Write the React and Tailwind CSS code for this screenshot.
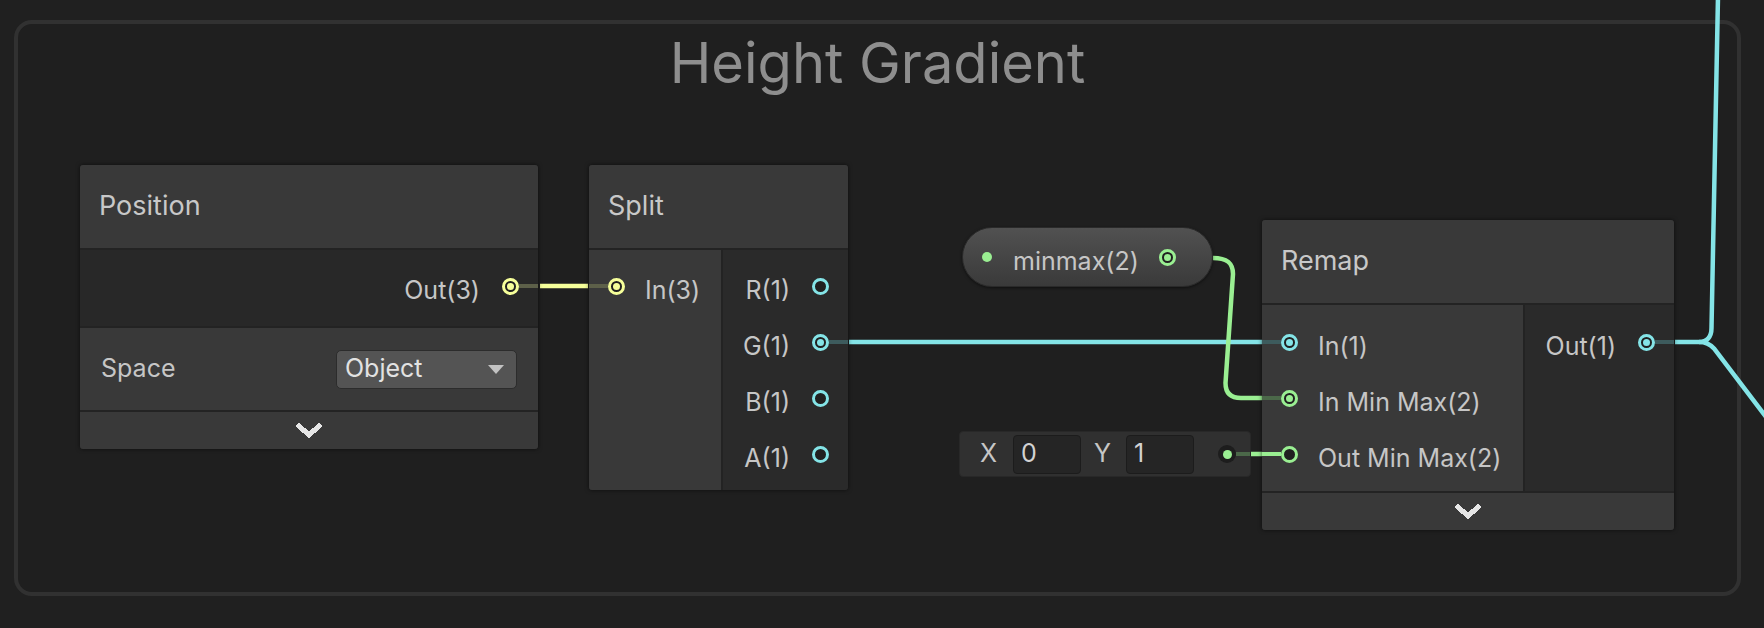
import React from "react";

const tones = {
  yellow: { ring: "border-[#f6ff9a]", dot: "bg-[#f6ff9a]", stub: "bg-[#5d6049]" },
  cyan: { ring: "border-[#84e4e7]", dot: "bg-[#84e4e7]", stub: "bg-[#3d5b5d]" },
  green: { ring: "border-[#9aef92]", dot: "bg-[#9aef92]", stub: "bg-[#4b6849]" },
};

function Port({ tone, connected }) {
  const t = tones[tone];
  return (
    <span className={`w-[17px] h-[17px] shrink-0 rounded-full border-[3px] ${t.ring} bg-[#202020] flex items-center justify-center`}>
      {connected && <span className={`w-[7px] h-[7px] rounded-full ${t.dot}`} />}
    </span>
  );
}

// unconnected ports have no stub, just empty space up to the node edge
function OutRow({ label, tone, connected, className = "h-[56px]" }) {
  return (
    <div className={`flex items-center justify-end ${className}`}>
      <span className="mt-[10px] mr-[22px]">{label}</span>
      <Port tone={tone} connected={connected} />
      <span className={`w-[19px] h-[4px] ${connected ? tones[tone].stub : ""}`} />
    </div>
  );
}

function InRow({ label, tone, connected, stub }) {
  return (
    <div className="h-[56px] flex items-center">
      <span className={`w-[19px] h-[4px] ${stub || (connected ? tones[tone].stub : "")}`} />
      <Port tone={tone} connected={connected} />
      <span className="mt-[10px] ml-[20px] whitespace-nowrap">{label}</span>
    </div>
  );
}

function Chevron() {
  return (
    <svg width="26" height="16" viewBox="0 0 26 16" shapeRendering="crispEdges">
      <path d="M3 3 L13 12 L23 3" fill="none" stroke="#e6e6e6" strokeWidth="5" strokeLinecap="square" />
    </svg>
  );
}

function Node({ className, title, children }) {
  return (
    <div className={`absolute flex flex-col gap-[2px] overflow-hidden rounded-[3px] bg-[#232323] text-[25px] text-[#c6c6c6] shadow-[0_0_4px_rgba(0,0,0,0.6)] ${className}`}>
      <div className="h-[83px] shrink-0 bg-[#393939] px-[19px] flex items-center text-[27px] text-[#c8c8c8]">{title}</div>
      {children}
    </div>
  );
}

function Collapse() {
  return (
    <div className="h-[37px] bg-[#393939] flex items-center justify-center">
      <Chevron />
    </div>
  );
}

function Wires() {
  return (
    <svg className="absolute inset-0 pointer-events-none" width="1764" height="628" viewBox="0 0 1764 628">
      <line x1="540" y1="286" x2="588" y2="286" stroke="#f6ff9a" strokeWidth="4.5" />
      <line x1="849" y1="342" x2="1263" y2="342" stroke="#84e4e7" strokeWidth="4.5" />
      <path d="M1213 258 C1226 258 1233 262 1233 274 L1225.5 383 C1225.5 392 1230 398 1241 398 L1263 398" fill="none" stroke="#9aef92" strokeWidth="4.5" />
      <line x1="1251" y1="454" x2="1263" y2="454" stroke="#9aef92" strokeWidth="4.5" />
      <path d="M1675 342 H1699 C1707 342 1711.5 337 1711.5 328 L1718 -4" fill="none" stroke="#84e4e7" strokeWidth="4.5" />
      <path d="M1699 342 C1706 342 1710 344 1714 348.5 L1782 438" fill="none" stroke="#84e4e7" strokeWidth="4.5" />
    </svg>
  );
}

export default function App() {
  return (
    <div className="relative w-[1764px] h-[628px] overflow-hidden bg-[#202020] font-[Inter,sans-serif]">
      {/* group frame */}
      <div className="absolute left-[14px] top-[20px] w-[1727px] h-[576px] rounded-[18px] border-4 border-[#313131] bg-[#1f1f1f]">
        <h1 className="pt-[11px] text-center text-[56px] leading-none text-[#8e8e8e]">Height Gradient</h1>
      </div>

      <Wires />

      {/* Position */}
      <Node className="left-[80px] top-[165px] w-[458px]" title="Position">
        <div className="bg-[#282828]">
          <OutRow label="Out(3)" tone="yellow" connected className="h-[76px] pb-[4px]" />
        </div>
        <div className="h-[82px] bg-[#393939] flex items-center justify-between px-[21px]">
          <span>Space</span>
          <div className="w-[181px] h-[39px] rounded-[5px] bg-[#545454] border border-[#2c2c2c] flex items-center justify-between pl-[8px] pr-[12px] text-[#e2e2e2]">
            <span>Object</span>
            <svg width="16" height="9" viewBox="0 0 16 9">
              <polygon points="0,0 16,0 8,9" fill="#c2c2c2" />
            </svg>
          </div>
        </div>
        <Collapse />
      </Node>

      {/* Split */}
      <Node className="left-[589px] top-[165px] w-[259px]" title="Split">
        <div className="h-[240px] flex gap-[2px]">
          <div className="w-[132px] bg-[#393939] pt-[8px]">
            <InRow label="In(3)" tone="yellow" connected />
          </div>
          <div className="flex-1 bg-[#2a2a2a] pt-[8px]">
            <OutRow label="R(1)" tone="cyan" />
            <OutRow label="G(1)" tone="cyan" connected />
            <OutRow label="B(1)" tone="cyan" />
            <OutRow label="A(1)" tone="cyan" />
          </div>
        </div>
      </Node>

      {/* property pill */}
      <div className="absolute left-[962px] top-[227px] w-[251px] h-[60px] rounded-full border border-[#2a2a2a] bg-linear-to-b from-[#515151] to-[#3a3a3a] flex items-center text-[25px] text-[#c6c6c6] shadow-[0_1px_3px_rgba(0,0,0,0.5)]">
        <span className="ml-[19px] w-[10px] h-[10px] rounded-full bg-[#9aef92]" />
        <span className="ml-[21px] mt-[10px]">minmax(2)</span>
        <span className="ml-auto mr-[36px]">
          <Port tone="green" connected />
        </span>
      </div>

      {/* inline vector field */}
      <div className="absolute left-[959px] top-[431px] w-[292px] h-[46px] rounded-[4px] bg-[#303030] border border-[#282828] flex items-center text-[25px] text-[#c6c6c6]">
        <span className="w-[53px] pl-[20px]">X</span>
        <div className="w-[68px] h-[39px] rounded-[4px] bg-[#252525] border border-[#1c1c1c] pl-[7px] flex items-center text-[#d2d2d2]">0</div>
        <span className="w-[45px] pl-[13px]">Y</span>
        <div className="w-[68px] h-[39px] rounded-[4px] bg-[#252525] border border-[#1c1c1c] pl-[7px] flex items-center text-[#d2d2d2]">1</div>
        <span className="ml-[24px] w-[18px] h-[18px] rounded-full bg-[#1d1d1d] flex items-center justify-center">
          <span className="w-[9px] h-[9px] rounded-full bg-[#9aef92]" />
        </span>
        <span className="flex-1 h-[4px] bg-[#4b6849]" />
      </div>

      {/* Remap */}
      <Node className="left-[1262px] top-[220px] w-[412px]" title="Remap">
        <div className="h-[186px] flex gap-[2px]">
          <div className="w-[261px] bg-[#393939] pt-[9px]">
            <InRow label="In(1)" tone="cyan" connected />
            <InRow label="In Min Max(2)" tone="green" connected />
            <InRow label="Out Min Max(2)" tone="green" stub="bg-[#9aef92]" />
          </div>
          <div className="flex-1 bg-[#2a2a2a] pt-[9px]">
            <OutRow label="Out(1)" tone="cyan" connected />
          </div>
        </div>
        <Collapse />
      </Node>
    </div>
  );
}
